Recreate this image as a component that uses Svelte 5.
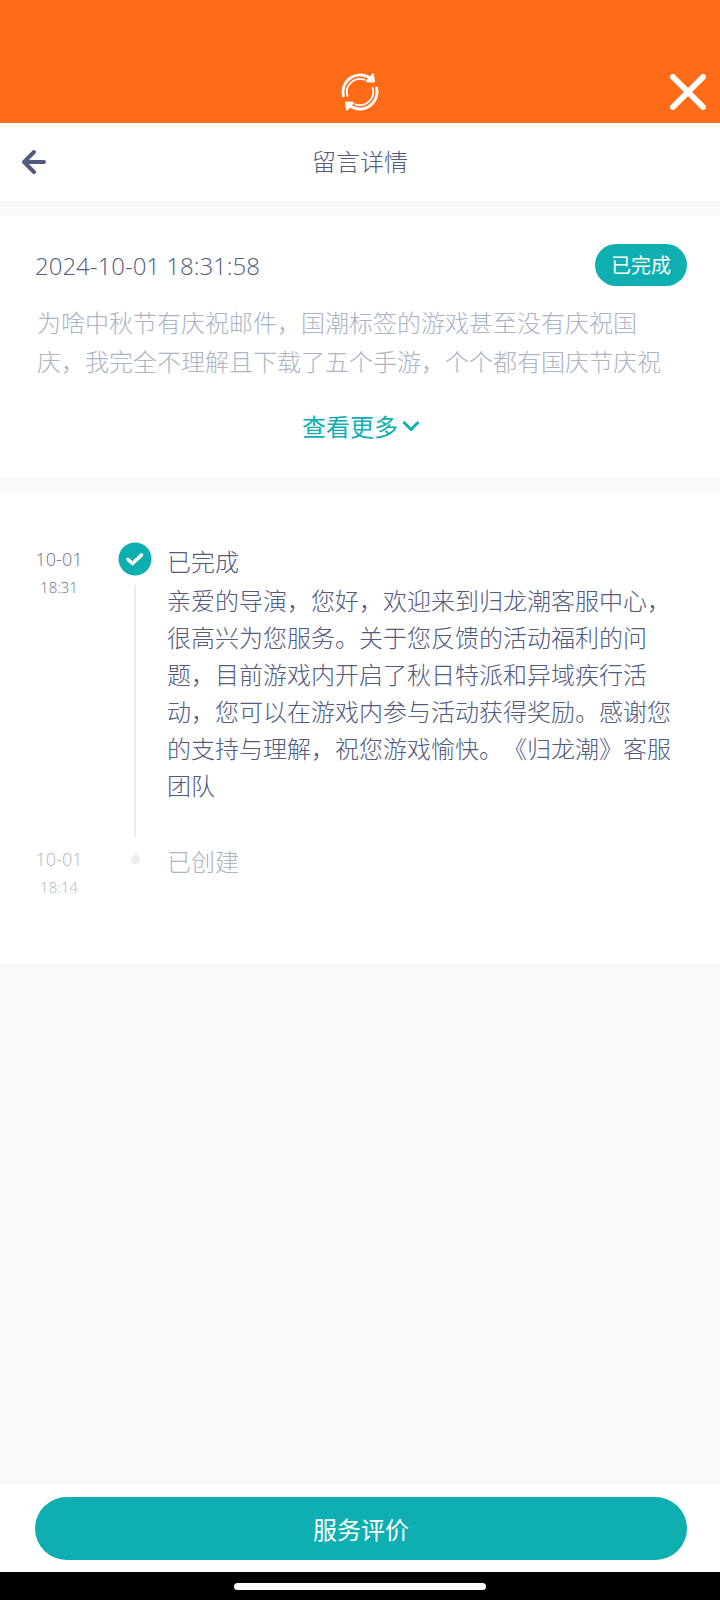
<script lang="ts">
    let expanded = $state(false);

    const ticket = {
        time: "2024-10-01 18:31:58",
        status: "已完成",
        text: "为啥中秋节有庆祝邮件，国潮标签的游戏甚至没有庆祝国庆，我完全不理解且下载了五个手游，个个都有国庆节庆祝",
    };

    const steps = [
        {
            date: "10-01",
            time: "18:31",
            title: "已完成",
            text: "亲爱的导演，您好，欢迎来到归龙潮客服中心，很高兴为您服务。关于您反馈的活动福利的问题，目前游戏内开启了秋日特派和异域疾行活动，您可以在游戏内参与活动获得奖励。感谢您的支持与理解，祝您游戏愉快。《归龙潮》客服团队",
            done: true,
        },
        { date: "10-01", time: "18:14", title: "已创建", text: "", done: false },
    ];
</script>

<div class="page">
    <div class="topbar">
        <button class="icon-btn refresh" aria-label="刷新">
            <svg width="40" height="40" viewBox="0 0 40 40" fill="none" stroke="#fff" stroke-linecap="round">
                <g id="half">
                    <path d="M3.4 24A17.200 17.200 0 0 1 31 6.800" stroke-width="2.800" />
                    <path d="M7.400 24A13.200 13.200 0 0 1 24.500 7.700" stroke-width="1.800" />
                    <path d="M33 2.500L34 9.500L27 9.200Z" fill="#fff" stroke-width="2" stroke-linejoin="round" />
                </g>
                <use href="#half" transform="rotate(180 20 20)" />
            </svg>
        </button>
        <button class="icon-btn close" aria-label="关闭">
            <svg width="36" height="36" viewBox="0 0 36 36" stroke="#fff" stroke-width="6" stroke-linecap="round">
                <path d="M3 3L33 33M33 3L3 33" />
            </svg>
        </button>
    </div>

    <header class="nav">
        <button class="icon-btn" aria-label="返回">
            <svg width="26" height="26" viewBox="0 0 26 26" fill="none" stroke="#525a7d" stroke-width="4" stroke-linecap="round" stroke-linejoin="round">
                <path d="M13 3L3 13L13 23M3.500 13H23" />
            </svg>
        </button>
        <h1>留言详情</h1>
    </header>

    <section class="card summary">
        <div class="summary-head">
            <time>{ticket.time}</time>
            <span class="badge">{ticket.status}</span>
        </div>
        <p class:expanded>{ticket.text}</p>
        <button class="more" onclick={() => (expanded = !expanded)}>
            查看更多
            <svg width="18" height="12" viewBox="0 0 18 12" fill="none" stroke="currentColor" stroke-width="3">
                <path d="M1.500 2L9 9.500L16.500 2" />
            </svg>
        </button>
    </section>

    <section class="card timeline">
        {#each steps as step}
            <div class="step" class:done={step.done}>
                <div class="when">
                    <span class="date">{step.date}</span>
                    <span class="clock">{step.time}</span>
                </div>
                <div class="rail">
                    <div class="mark">
                        {#if step.done}
                            <svg width="34" height="34" viewBox="0 0 34 34" fill="none">
                                <circle cx="17" cy="17" r="16.500" fill="#0eaeb1" />
                                <path d="M10 17.500L14.500 21.500L23.500 13" stroke="#fff" stroke-width="3.600" stroke-linecap="round" stroke-linejoin="round" />
                            </svg>
                        {:else}
                            <i class="dot"></i>
                        {/if}
                    </div>
                    {#if step.done}
                        <div class="line"></div>
                    {/if}
                </div>
                <div class="body">
                    <h2>{step.title}</h2>
                    {#if step.text}
                        <p>{step.text}</p>
                    {/if}
                </div>
            </div>
        {/each}
    </section>

    <footer class="footer">
        <button class="rate">服务评价</button>
    </footer>
    <div class="gesture"><span></span></div>
</div>

<style>
    .page {
        min-height: 100vh;
        display: flex;
        flex-direction: column;
        background: #f7f9fb;
        color: #525a7d;
        font-family: "Noto Sans CJK SC", sans-serif;
        font-size: 24px;
        font-weight: 300;
        text-spacing-trim: space-all;
    }

    h1,
    h2,
    p {
        margin: 0;
        font-size: 24px;
        font-weight: 300;
    }

    button {
        padding: 0;
        border: none;
        background: none;
        font: inherit;
        color: inherit;
        cursor: pointer;
    }

    svg {
        display: block;
    }

    .topbar {
        display: grid;
        grid-template-columns: 1fr auto 1fr;
        align-items: center;
        padding: 72px 14px 11px;
        background: #ff6b17;
    }

    .refresh {
        grid-column: 2;
    }

    .close {
        justify-self: end;
    }

    .nav {
        display: grid;
        grid-template-columns: 1fr auto 1fr;
        align-items: center;
        height: 78px;
        padding: 0 21px;
        margin-bottom: 15px;
        background: #fff;
    }

    .nav .icon-btn {
        justify-self: start;
    }

    h1 {
        line-height: 32px;
        padding-bottom: 3px;
    }

    .card {
        background: #fff;
    }

    .summary {
        padding: 28px 33px 31px 35px;
        margin-bottom: 16px;
    }

    .summary-head {
        display: flex;
        justify-content: space-between;
        align-items: center;
    }

    time,
    .when {
        font-family: "Open Sans", "Noto Sans CJK SC", sans-serif;
    }

    .badge {
        padding: 0 16px;
        border-radius: 21px;
        background: #0eaeb1;
        color: #fff;
        font-size: 20px;
        font-weight: 400;
        line-height: 42px;
    }

    .summary p {
        margin-top: 16px;
        padding: 0 10px 0 2px;
        color: #abb3c6;
        line-height: 39px;
        max-height: 78px;
        overflow: hidden;
    }

    .summary p.expanded {
        max-height: none;
    }

    .more {
        display: flex;
        align-items: center;
        justify-content: center;
        gap: 4px;
        width: 100%;
        margin-top: 26px;
        color: #0eaeb1;
        font-weight: 400;
        line-height: 40px;
    }

    .timeline {
        padding: 48px 33px 67px 35px;
    }

    .step {
        display: grid;
        grid-template-columns: 48px 34px 1fr;
        column-gap: 35px;
        color: #abb3c6;
    }

    .step.done {
        color: #525a7d;
    }

    .when {
        display: flex;
        flex-direction: column;
        align-items: center;
        color: #b0b5c2;
    }

    .done .when {
        color: #6c7188;
    }

    .date {
        font-size: 18px;
        line-height: 36px;
    }

    .clock {
        font-size: 15px;
        line-height: 20px;
    }

    .rail {
        display: flex;
        flex-direction: column;
        align-items: center;
    }

    .mark {
        display: flex;
        align-items: center;
        justify-content: center;
        height: 36px;
    }

    .dot {
        width: 9px;
        height: 9px;
        border-radius: 50%;
        background: #ebecee;
    }

    .line {
        flex: 1;
        width: 2px;
        margin: 8px 0 4px;
        background: #ebecee;
    }

    .body {
        margin-left: -20px;
    }

    h2 {
        line-height: 40px;
    }

    .body p {
        line-height: 37px;
        padding-bottom: 38px;
    }

    .footer {
        margin-top: auto;
        padding: 13px 33px 12px 35px;
        background: #fff;
    }

    .rate {
        display: block;
        width: 100%;
        height: 63px;
        border-radius: 32px;
        background: #0eaeb1;
        color: #fff;
        font-weight: 400;
    }

    .gesture {
        display: flex;
        justify-content: center;
        padding: 11px 0 10px;
        background: #000;
    }

    .gesture span {
        width: 35%;
        height: 7px;
        border-radius: 4px;
        background: #fff;
    }
</style>
